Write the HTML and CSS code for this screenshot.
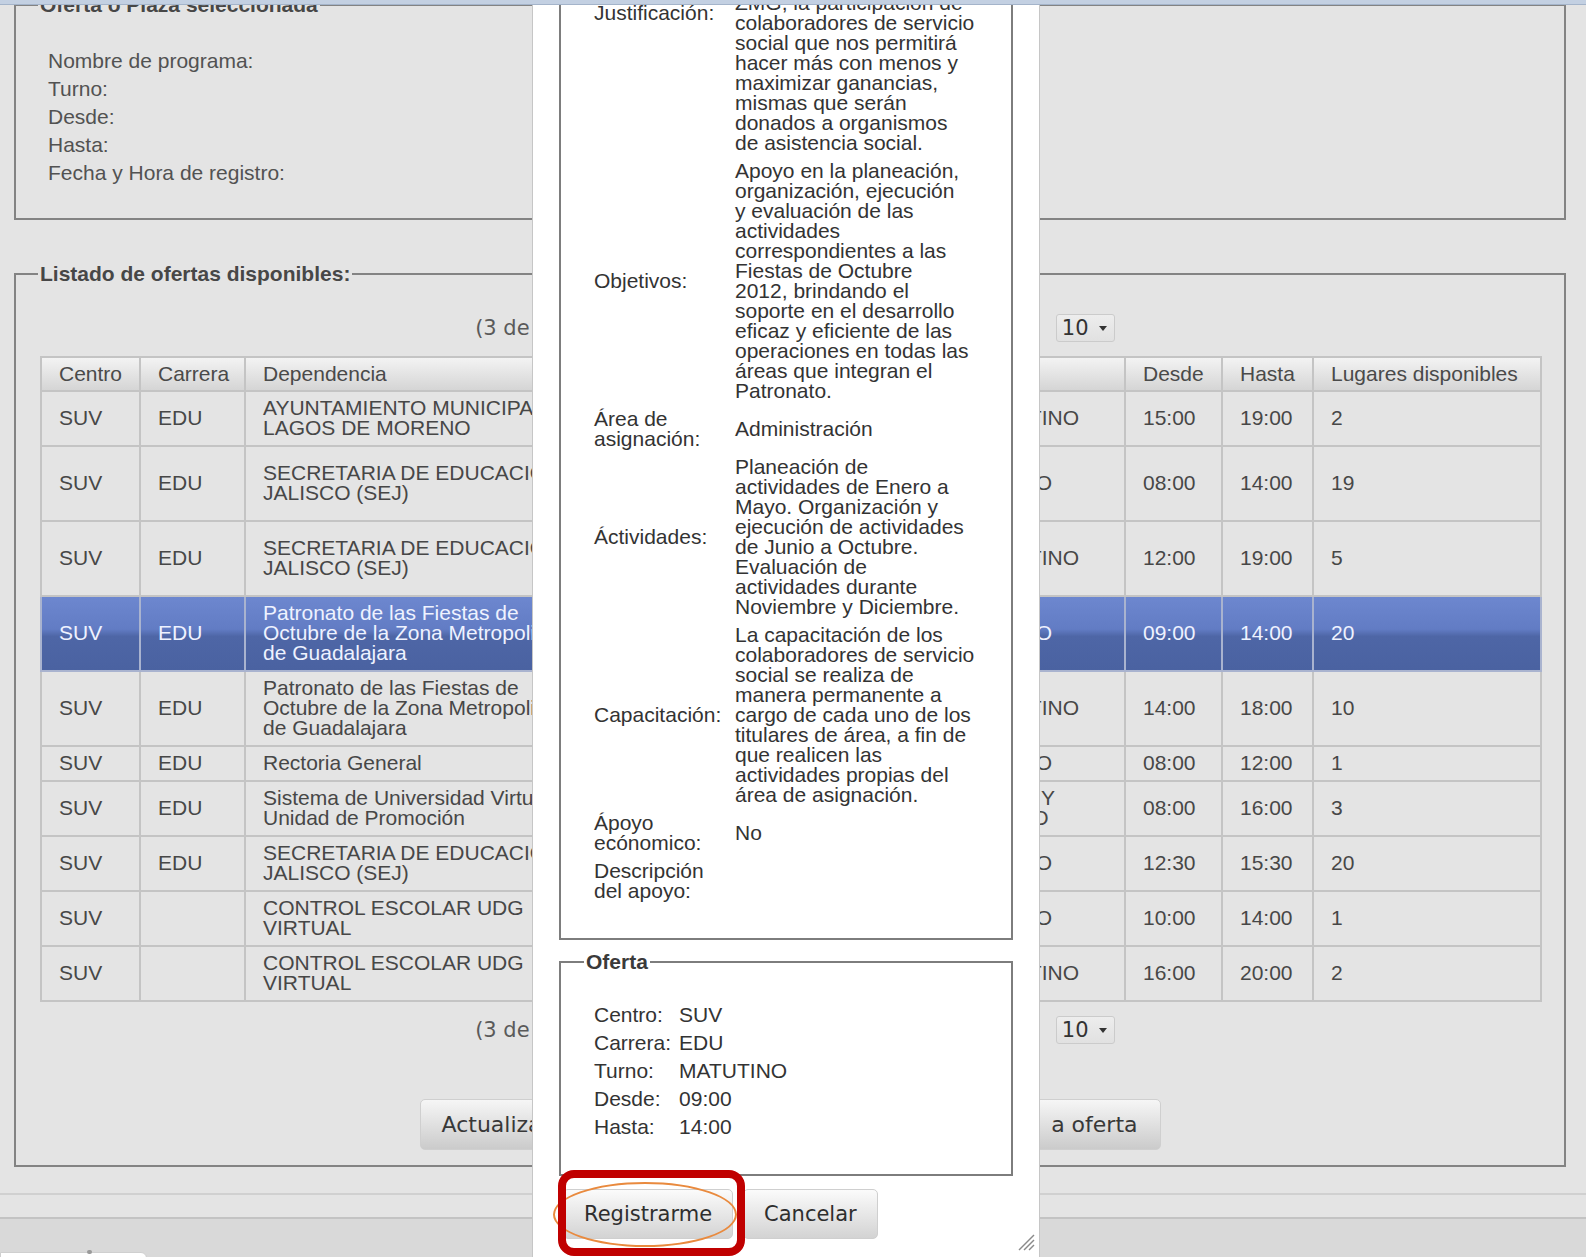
FILE: index.html
```html
<!DOCTYPE html>
<html lang="es">
<head>
<meta charset="utf-8">
<title>Ofertas de servicio social</title>
<link rel="stylesheet" href="styles.css">
</head>
<body>
<div class="topstrip"></div>

<main class="page">
  <fieldset class="box">
    <legend>Oferta o Plaza seleccionada</legend>
    <div class="sel-list">
      <div>Nombre de programa:</div>
      <div>Turno:</div>
      <div>Desde:</div>
      <div>Hasta:</div>
      <div>Fecha y Hora de registro:</div>
    </div>
  </fieldset>

  <fieldset class="box box-list">
    <legend>Listado de ofertas disponibles:</legend>
    <div class="list-inner">
      <div class="paginator">
        <span class="pg-status">(3 de 3)</span>
        <span class="pg-links">« ‹ 1 2 3 › »</span>
        <span class="pg-select">10<span class="caret"></span></span>
      </div>

      <table class="grid">
        <colgroup>
          <col class="c-centro"><col class="c-carrera"><col class="c-dep"><col class="c-prog"><col class="c-turno"><col class="c-desde"><col class="c-hasta"><col class="c-lug">
        </colgroup>
        <thead>
          <tr><th>Centro</th><th>Carrera</th><th>Dependencia</th><th>Programa</th><th>Turno</th><th>Desde</th><th>Hasta</th><th>Lugares disponibles</th></tr>
        </thead>
        <tbody>
          <tr><td>SUV</td><td>EDU</td><td>AYUNTAMIENTO MUNICIPAL DE<br>LAGOS DE MORENO</td><td>Apoyo administrativo<br>en oficinas</td><td>VESPERTINO</td><td>15:00</td><td>19:00</td><td>2</td></tr>
          <tr><td>SUV</td><td>EDU</td><td>SECRETARIA DE EDUCACION<br>JALISCO (SEJ)</td><td>Apoyo en<br>actividades<br>educativas</td><td>MATUTINO</td><td>08:00</td><td>14:00</td><td>19</td></tr>
          <tr><td>SUV</td><td>EDU</td><td>SECRETARIA DE EDUCACION<br>JALISCO (SEJ)</td><td>Apoyo en<br>actividades<br>escolares</td><td>VESPERTINO</td><td>12:00</td><td>19:00</td><td>5</td></tr>
          <tr class="sel"><td>SUV</td><td>EDU</td><td>Patronato de las Fiestas de<br>Octubre de la Zona Metropolitana<br>de Guadalajara</td><td>Apoyo en la<br>organización de las<br>Fiestas de Octubre</td><td>MATUTINO</td><td>09:00</td><td>14:00</td><td>20</td></tr>
          <tr><td>SUV</td><td>EDU</td><td>Patronato de las Fiestas de<br>Octubre de la Zona Metropolitana<br>de Guadalajara</td><td>Apoyo en la<br>logística de las<br>Fiestas de Octubre</td><td>VESPERTINO</td><td>14:00</td><td>18:00</td><td>10</td></tr>
          <tr><td>SUV</td><td>EDU</td><td>Rectoria General</td><td>Apoyo administrativo</td><td>MATUTINO</td><td>08:00</td><td>12:00</td><td>1</td></tr>
          <tr><td>SUV</td><td>EDU</td><td>Sistema de Universidad Virtual<br>Unidad de Promoción</td><td>Promoción de<br>programas</td><td>ABIERTO Y<br>SABATINO</td><td>08:00</td><td>16:00</td><td>3</td></tr>
          <tr><td>SUV</td><td>EDU</td><td>SECRETARIA DE EDUCACION<br>JALISCO (SEJ)</td><td>Apoyo en<br>oficinas</td><td>MATUTINO</td><td>12:30</td><td>15:30</td><td>20</td></tr>
          <tr><td>SUV</td><td></td><td>CONTROL ESCOLAR UDG<br>VIRTUAL</td><td>Control<br>escolar</td><td>MATUTINO</td><td>10:00</td><td>14:00</td><td>1</td></tr>
          <tr><td>SUV</td><td></td><td>CONTROL ESCOLAR UDG<br>VIRTUAL</td><td>Control<br>escolar</td><td>VESPERTINO</td><td>16:00</td><td>20:00</td><td>2</td></tr>
        </tbody>
      </table>

      <div class="paginator paginator-bottom">
        <span class="pg-status">(3 de 3)</span>
        <span class="pg-links">« ‹ 1 2 3 › »</span>
        <span class="pg-select">10<span class="caret"></span></span>
      </div>

      <div class="actions">
        <button class="btn btn-page" type="button">Actualizar</button>
        <button class="btn btn-page" type="button">Ver detalle</button>
        <button class="btn btn-page" type="button">Registrarse <span class="btn-tail">a oferta</span></button>
      </div>
    </div>
  </fieldset>

  <div class="band"></div>
  <div class="bar"><span class="tab"><span class="tab-mark"></span></span></div>
</main>

<section class="dialog">
  <fieldset class="dlg-box">
    <legend>Detalle de la oferta</legend>
    <table class="detail">
      <tr>
        <td class="k">Justificación:</td>
        <td class="v">El Patronato de las Fiestas<br>de Octubre tiene como<br>objetivo la realización de<br>eventos culturales y<br>recreativos en favor de<br>los habitantes de la<br>ZMG, la participación de<br>colaboradores de servicio<br>social que nos permitirá<br>hacer más con menos y<br>maximizar ganancias,<br>mismas que serán<br>donados a organismos<br>de asistencia social.</td>
      </tr>
      <tr>
        <td class="k">Objetivos:</td>
        <td class="v">Apoyo en la planeación,<br>organización, ejecución<br>y evaluación de las<br>actividades<br>correspondientes a las<br>Fiestas de Octubre<br>2012, brindando el<br>soporte en el desarrollo<br>eficaz y eficiente de las<br>operaciones en todas las<br>áreas que integran el<br>Patronato.</td>
      </tr>
      <tr>
        <td class="k">Área de<br>asignación:</td>
        <td class="v">Administración</td>
      </tr>
      <tr>
        <td class="k">Áctividades:</td>
        <td class="v">Planeación de<br>actividades de Enero a<br>Mayo. Organización y<br>ejecución de actividades<br>de Junio a Octubre.<br>Evaluación de<br>actividades durante<br>Noviembre y Diciembre.</td>
      </tr>
      <tr>
        <td class="k">Capacitación:</td>
        <td class="v">La capacitación de los<br>colaboradores de servicio<br>social se realiza de<br>manera permanente a<br>cargo de cada uno de los<br>titulares de área, a fin de<br>que realicen las<br>actividades propias del<br>área de asignación.</td>
      </tr>
      <tr>
        <td class="k">Ápoyo<br>ecónomico:</td>
        <td class="v">No</td>
      </tr>
      <tr>
        <td class="k">Descripción<br>del apoyo:</td>
        <td class="v"></td>
      </tr>
    </table>
  </fieldset>

  <fieldset class="dlg-box dlg-offer">
    <legend>Oferta</legend>
    <div class="offer-grid">
      <span>Centro:</span><span>SUV</span>
      <span>Carrera:</span><span>EDU</span>
      <span>Turno:</span><span>MATUTINO</span>
      <span>Desde:</span><span>09:00</span>
      <span>Hasta:</span><span>14:00</span>
    </div>
  </fieldset>

  <div class="dlg-actions">
    <button class="btn btn-dlg" type="button">Registrarme</button>
    <button class="btn btn-dlg" type="button">Cancelar</button>
  </div>

  <svg class="grip" width="18" height="18" viewBox="0 0 18 18" aria-hidden="true">
    <line x1="2" y1="17" x2="17" y2="2" stroke="#8a8a8a" stroke-width="1.4"/>
    <line x1="7" y1="17" x2="17" y2="7" stroke="#8a8a8a" stroke-width="1.4"/>
    <line x1="12" y1="17" x2="17" y2="12" stroke="#8a8a8a" stroke-width="1.4"/>
  </svg>
</section>

<div class="mark-ellipse"></div>
<div class="mark-box"></div>
</body>
</html>
```

FILE: styles.css
```css
* { box-sizing: border-box; }

html, body {
  margin: 0;
  height: 100%;
  overflow: hidden;
}

body {
  background: #e4e4e4;
  font-family: "Liberation Sans", Arial, sans-serif;
  font-size: 21px;
  color: #4a4a4a;
}

.topstrip {
  position: fixed;
  top: 0;
  left: 0;
  right: 0;
  height: 5px;
  background: #c3d0e2;
  border-bottom: 1px solid #a4b4ca;
  z-index: 20;
}

.page {
  margin-top: -7px;
}

/* page fieldsets */
.box {
  margin: 0 20px 0 14px;
  padding: 0;
  min-width: 0;
  border: 2px solid #838383;
}

.box legend {
  margin-left: 22px;
  padding: 0 2px;
  font-weight: bold;
  line-height: 24px;
  color: #474747;
}

.sel-list {
  padding: 30px 0 31px 32px;
  line-height: 28px;
  color: #525252;
}

.box-list {
  margin-top: 42px;
}

.list-inner {
  padding: 28px 24px 15px;
}

/* paginator */
.paginator {
  display: flex;
  justify-content: center;
  align-items: center;
  gap: 12px;
  height: 28px;
  padding-left: 10px;
  font-family: "DejaVu Sans", Verdana, sans-serif;
  font-size: 21px;
  color: #5a5a5a;
}

.paginator-bottom {
  margin-top: 14px;
}

.pg-links {
  width: 474px;
  text-align: center;
  color: #666;
}

.pg-select {
  display: flex;
  align-items: center;
  width: 59px;
  height: 28px;
  padding-left: 5px;
  border: 1px solid #cbcbcb;
  border-radius: 3px;
  background: linear-gradient(#ededed, #e1e1e1);
  color: #333;
  line-height: 26px;
}

.caret {
  margin-left: 10px;
  width: 0;
  height: 0;
  border-left: 4px solid transparent;
  border-right: 4px solid transparent;
  border-top: 5px solid #333;
}

/* data table */
.grid {
  width: 100%;
  margin-top: 14px;
  table-layout: fixed;
  border-collapse: collapse;
  line-height: 20px;
  color: #474747;
}

.c-centro { width: 99px; }
.c-carrera { width: 105px; }
.c-dep { width: 350px; }
.c-prog { width: 331px; }
.c-turno { width: 199px; }
.c-desde { width: 97px; }
.c-hasta { width: 91px; }
.c-lug { width: 228px; }

.grid th,
.grid td {
  border: 2px solid #c4c4c4;
  padding: 6px 17px 7px;
  text-align: left;
  vertical-align: middle;
  font-weight: normal;
  white-space: nowrap;
  overflow: hidden;
}

.grid th {
  padding: 6px 17px;
  background: linear-gradient(#f3f3f3, #d5d5d5);
  color: #4a4a4a;
}

.grid tr.sel td {
  background: linear-gradient(#6d87cf 0%, #627cc4 44%, #4e66a6 54%, #4a62a1 100%);
  color: #eef2ff;
  border-color: #a9b3cf;
}

/* buttons */
.actions {
  width: 741px;
  margin: 55px auto 0;
  display: flex;
  justify-content: space-between;
}

.btn {
  height: 51px;
  padding: 0 21px;
  border: 1px solid #cfcfcf;
  border-radius: 5px;
  background: linear-gradient(#f6f6f6, #cbcbcb);
  font-family: "DejaVu Sans", Verdana, sans-serif;
  font-size: 21px;
  color: #383838;
}

.btn-page {
  font-size: 22px;
  padding: 0 22px 0 21px;
}

.btn-tail {
  margin-left: 6px;
}

/* footer */
.band {
  margin-top: 26px;
  height: 24px;
  border-top: 2px solid #d0d0d0;
}

.bar {
  height: 60px;
  padding-top: 33px;
  border-top: 2px solid #c3c3c3;
  background: #d9d9d9;
}

.tab {
  display: block;
  position: relative;
  width: 147px;
  height: 12px;
  background: #fff;
  border: 1px solid #cfcfcf;
  border-top-right-radius: 6px;
}

.tab-mark {
  position: absolute;
  left: 86px;
  top: -3px;
  width: 5px;
  height: 4px;
  background: #9a9a9a;
  border-radius: 2px;
}

/* dialog */
.dialog {
  position: fixed;
  left: 532px;
  bottom: 0;
  width: 508px;
  padding: 0 26px 18px;
  background: #fff;
  border: 1px solid #c6c6c6;
  border-bottom: 0;
  color: #333;
  z-index: 5;
}

.dlg-box {
  margin: 0;
  padding: 0;
  min-width: 0;
  border: 2px solid #7d7d7d;
}

.dlg-box legend {
  margin-left: 23px;
  padding: 0 2px;
  font-weight: bold;
  line-height: 24px;
  color: #3a3a3a;
}

.detail {
  margin: 24px 8px 33px 29px;
  border-collapse: collapse;
  line-height: 20px;
}

.detail td {
  padding: 4px;
  vertical-align: middle;
}

.detail td.k {
  width: 141px;
}

.detail td.v {
  white-space: nowrap;
}

.dlg-offer {
  margin-top: 10px;
}

.offer-grid {
  display: grid;
  grid-template-columns: auto 1fr;
  column-gap: 8px;
  padding: 27px 0 33px 33px;
  line-height: 28px;
}

.dlg-actions {
  display: flex;
  gap: 10px;
  margin-top: 13px;
  padding-left: 4px;
}

.btn-dlg {
  height: 50px;
  padding: 0 20px;
  background: linear-gradient(#fbfbfb, #d3d3d3);
  color: #2e2e2e;
}

.grip {
  position: absolute;
  right: 4px;
  bottom: 6px;
}

/* annotation overlays */
.mark-box {
  position: fixed;
  left: 558px;
  top: 1170px;
  width: 187px;
  height: 86px;
  border: 8px solid #c00000;
  border-radius: 16px;
  z-index: 30;
}

.mark-ellipse {
  position: fixed;
  left: 553px;
  top: 1182px;
  width: 184px;
  height: 65px;
  border: 2px solid #e98a3e;
  border-radius: 50%;
  z-index: 29;
}
```
